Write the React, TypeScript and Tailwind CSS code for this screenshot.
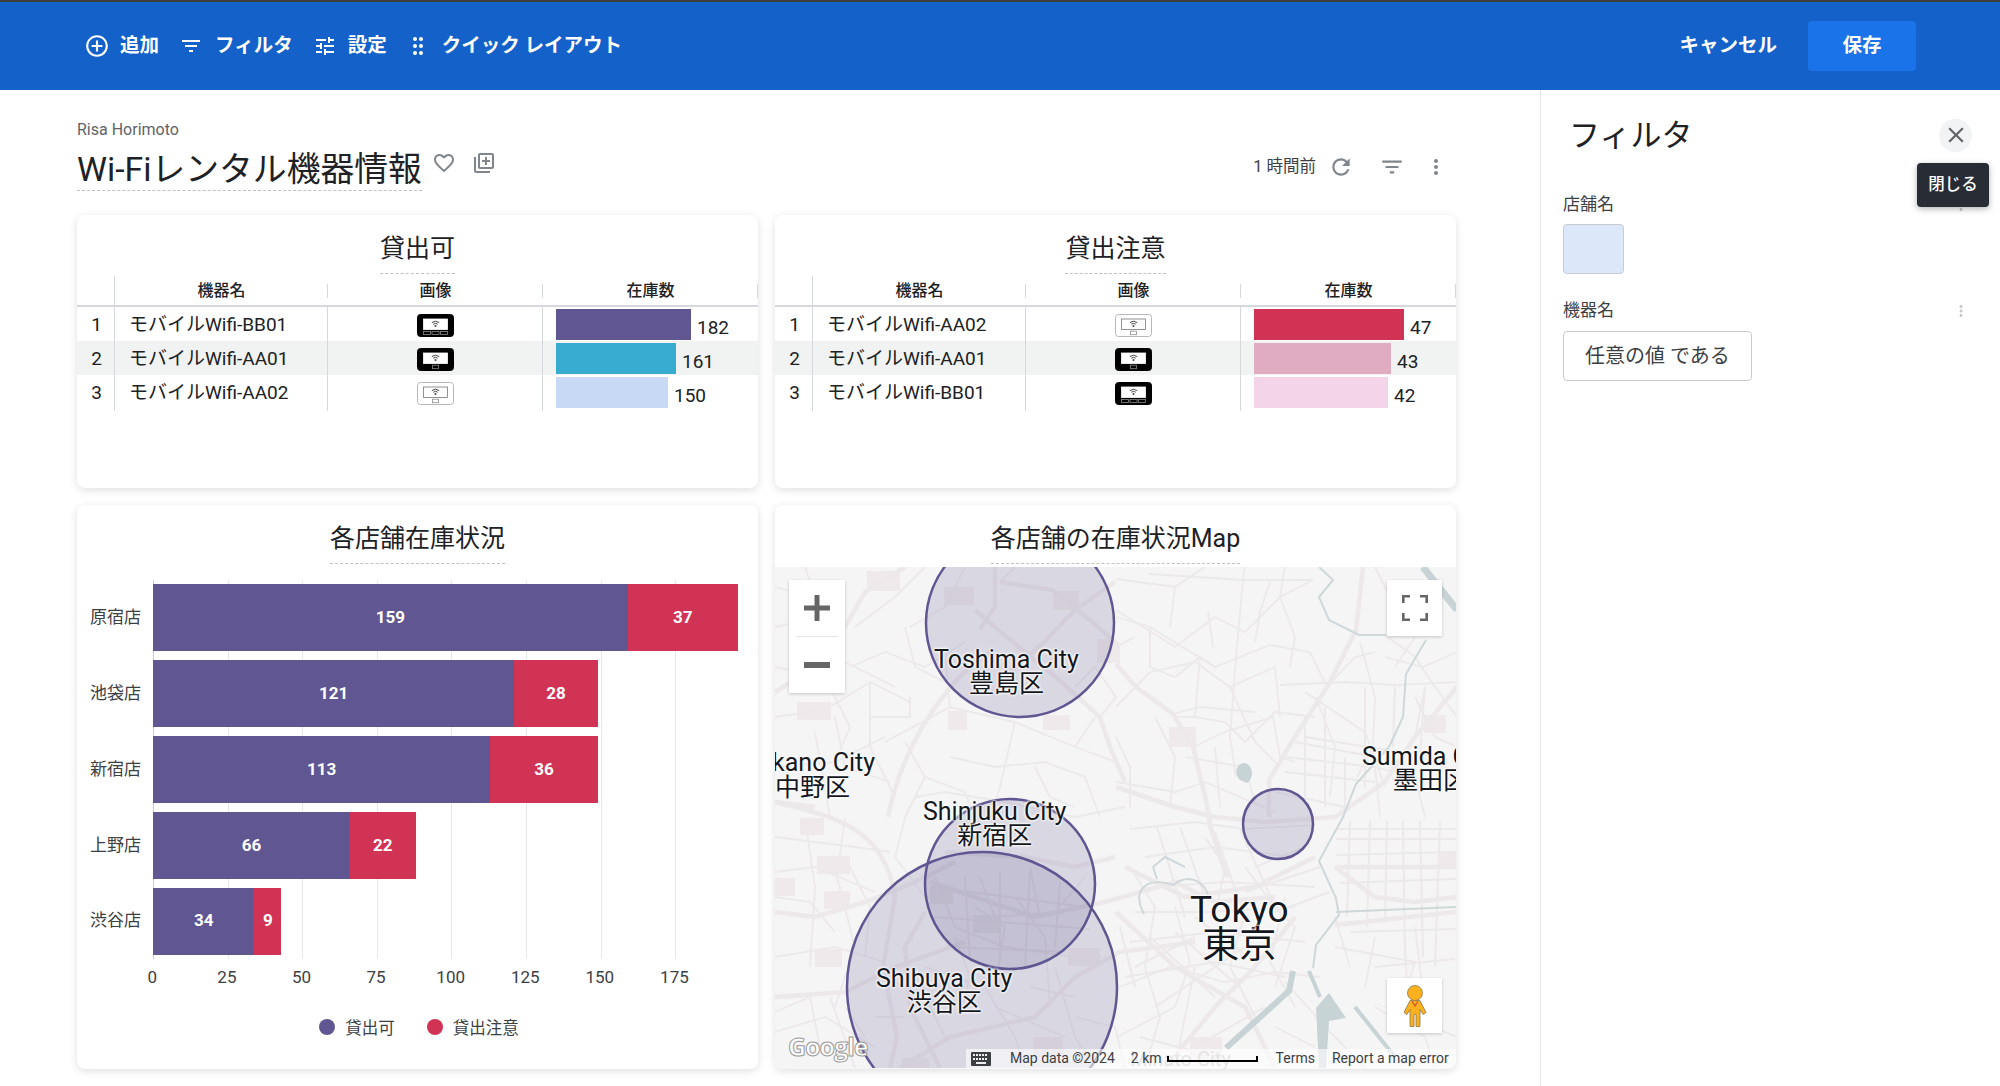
import React from "react";

type Device = "bb" | "aa01" | "aa02";
type StockRow = { no: number; name: string; device: Device; width: number; color: string; value: number };

const availableRows: StockRow[] = [
  { no: 1, name: "モバイルWifi-BB01", device: "bb", width: 135, color: "#5f5692", value: 182 },
  { no: 2, name: "モバイルWifi-AA01", device: "aa01", width: 120, color: "#38abd1", value: 161 },
  { no: 3, name: "モバイルWifi-AA02", device: "aa02", width: 112, color: "#c7d9f5", value: 150 },
];

const cautionRows: StockRow[] = [
  { no: 1, name: "モバイルWifi-AA02", device: "aa02", width: 150, color: "#d13354", value: 47 },
  { no: 2, name: "モバイルWifi-AA01", device: "aa01", width: 137, color: "#dfacc1", value: 43 },
  { no: 3, name: "モバイルWifi-BB01", device: "bb", width: 134, color: "#f3d4e8", value: 42 },
];

const stores = [
  { name: "原宿店", ok: 159, caution: 37 },
  { name: "池袋店", ok: 121, caution: 28 },
  { name: "新宿店", ok: 113, caution: 36 },
  { name: "上野店", ok: 66, caution: 22 },
  { name: "渋谷店", ok: 34, caution: 9 },
];

const ticks = [0, 25, 50, 75, 100, 125, 150, 175];
const UNIT = 2.985;

function Mi({ d, className }: { d: string; className?: string }) {
  return (
    <svg viewBox="0 0 24 24" fill="currentColor" className={className}>
      <path d={d} />
    </svg>
  );
}

const ICONS = {
  add: "M13 7h-2v4H7v2h4v4h2v-4h4v-2h-4V7zm-1-5C6.48 2 2 6.48 2 12s4.48 10 10 10 10-4.48 10-10S17.52 2 12 2zm0 18c-4.41 0-8-3.59-8-8s3.59-8 8-8 8 3.59 8 8-3.59 8-8 8z",
  filter: "M10 18h4v-2h-4v2zM3 6v2h18V6H3zm3 7h12v-2H6v2z",
  tune: "M3 17v2h6v-2H3zM3 5v2h10V5H3zm10 16v-2h8v-2h-8v-2h-2v6h2zM7 9v2H3v2h4v2h2V9H7zm14 4v-2H11v2h10zm-6-4h2V7h4V5h-4V3h-2v6z",
  refresh: "M17.65 6.35C16.2 4.9 14.21 4 12 4c-4.42 0-7.99 3.58-7.99 8s3.57 8 7.99 8c3.73 0 6.84-2.55 7.73-6h-2.08c-.82 2.33-3.04 4-5.65 4-3.31 0-6-2.69-6-6s2.69-6 6-6c1.66 0 3.14.69 4.22 1.78L13 11h7V4l-2.35 2.35z",
  heart: "M16.5 3c-1.74 0-3.41.81-4.5 2.09C10.91 3.81 9.24 3 7.5 3 4.42 3 2 5.42 2 8.5c0 3.78 3.4 6.86 8.55 11.54L12 21.35l1.45-1.32C18.6 15.36 22 12.28 22 8.5 22 5.42 19.58 3 16.5 3zm-4.4 15.55l-.1.1-.1-.1C7.14 14.24 4 11.39 4 8.5 4 6.5 5.5 5 7.5 5c1.54 0 3.04.99 3.57 2.36h1.87C13.46 5.99 14.96 5 16.5 5c2 0 3.5 1.5 3.5 3.5 0 2.89-3.14 5.74-7.9 10.05z",
  library: "M4 6H2v14c0 1.1.9 2 2 2h14v-2H4V6zm16-4H8c-1.1 0-2 .9-2 2v12c0 1.1.9 2 2 2h12c1.1 0 2-.9 2-2V4c0-1.1-.9-2-2-2zm0 14H8V4h12v12zm-7-2h2v-3h3V9h-3V6h-2v3h-3v2h3z",
  more: "M12 8c1.1 0 2-.9 2-2s-.9-2-2-2-2 .9-2 2 .9 2 2 2zm0 2c-1.1 0-2 .9-2 2s.9 2 2 2 2-.9 2-2-.9-2-2-2zm0 6c-1.1 0-2 .9-2 2s.9 2 2 2 2-.9 2-2-.9-2-2-2z",
  close: "M19 6.41L17.59 5 12 10.59 6.41 5 5 6.41 10.59 12 5 17.59 6.41 19 12 13.41 17.59 19 19 17.59 13.41 12z",
};

function DragDots() {
  return (
    <svg viewBox="0 0 12 20" fill="currentColor" className="w-[12px] h-[20px]">
      {[3, 10, 17].map((y) => (
        <g key={y}>
          <circle cx="3" cy={y} r="2" />
          <circle cx="9" cy={y} r="2" />
        </g>
      ))}
    </svg>
  );
}

function DeviceIcon({ device }: { device: Device }) {
  const dark = device !== "aa02";
  return (
    <svg viewBox="0 0 37 23" className="w-[37px] h-[23px]">
      <rect x="0.5" y="0.5" width="36" height="22" rx="3" fill={dark ? "#000" : "#fff"} stroke={dark ? "#000" : "#b5b8bb"} />
      <rect x="6.5" y="5" width="24" height="10.5" fill="#fff" stroke={dark ? "#fff" : "#777"} strokeWidth="0.8" />
      <path d="M14.8 8.6 Q18.5 5.8 22.2 8.6 M16.3 10.2 Q18.5 8.5 20.7 10.2" fill="none" stroke="#444" strokeWidth="1" />
      <circle cx="18.5" cy="12" r="1" fill="#444" />
      {device === "bb" ? (
        <g fill="none" stroke="#8a8a8a" strokeWidth="0.8">
          <rect x="6.5" y="17.5" width="7" height="3" />
          <rect x="15" y="17.5" width="7" height="3" />
          <rect x="23.5" y="17.5" width="7" height="3" />
        </g>
      ) : (
        <rect x="15.5" y="17.2" width="6" height="3.5" fill="none" stroke="#8a8a8a" strokeWidth="0.8" />
      )}
    </svg>
  );
}

function CardTitle({ title }: { title: string }) {
  return (
    <div className="h-[61px] pt-[17px] flex justify-center shrink-0">
      <span className="h-[42px] pb-[7px] leading-[34px] text-[25px] text-[#202124] border-b border-dashed border-[#bdc1c6]">
        {title}
      </span>
    </div>
  );
}

function StockTable({ title, rows }: { title: string; rows: StockRow[] }) {
  const head = "flex items-center justify-center text-[16px] font-medium text-[#202124]";
  const sep = "border-r border-[#d5d8dc]";
  return (
    <div className="bg-white rounded-lg shadow-[0_2px_8px_rgba(0,0,0,0.13)] overflow-hidden">
      <CardTitle title={title} />
      <div className="grid grid-cols-[38px_213px_215px_215px] h-[31px] border-b-2 border-[#d5d8dc]">
        <div className={sep} />
        {["機器名", "画像", "在庫数"].map((h) => (
          <div key={h} className="relative">
            <div className={`${head} h-full`}>{h}</div>
            <div className="absolute right-0 top-[8px] h-[14px] w-px bg-[#d5d8dc]" />
          </div>
        ))}
      </div>
      {rows.map((r) => (
        <div
          key={r.no}
          className={`grid grid-cols-[38px_213px_215px_215px] h-[34px] text-[19px] text-[#202124] ${r.no === 2 ? "bg-[#f1f3f3]" : ""}`}
        >
          <div className={`${sep} flex items-center justify-center pl-[2px]`}>{r.no}</div>
          <div className={`${sep} flex items-center pl-[14px] whitespace-nowrap`}>{r.name}</div>
          <div className={`${sep} flex items-center justify-center pt-[2px]`}>
            <DeviceIcon device={r.device} />
          </div>
          <div className="flex items-center pl-[13px]">
            <div className="h-[31px]" style={{ width: r.width, backgroundColor: r.color }} />
            <span className="ml-[6px] pt-[7px] text-[19px]">{r.value}</span>
          </div>
        </div>
      ))}
    </div>
  );
}

function StoreChart() {
  return (
    <div className="bg-white rounded-lg shadow-[0_2px_8px_rgba(0,0,0,0.13)] overflow-hidden flex flex-col">
      <CardTitle title="各店舗在庫状況" />
      <div className="mt-[14px] relative h-[379px]">
        {/* grid lines */}
        <div className="absolute left-[76px] top-0 bottom-0 flex">
          {ticks.map((t) => (
            <div key={t} className={`w-[74.6px] border-l ${t === 0 ? "border-[#c9ccd1]" : "border-[#e6e7ea]"}`} />
          ))}
        </div>
        <div className="relative h-full flex flex-col">
          {stores.map((s) => (
            <div key={s.name} className="flex-1 flex items-center">
              <div className="w-[76px] pr-[12px] text-right text-[17px] text-[#3c4043]">{s.name}</div>
              <div className="flex h-[67px] text-white font-bold text-[17px]">
                <div className="flex items-center justify-center bg-[#5f5692]" style={{ width: s.ok * UNIT }}>
                  {s.ok}
                </div>
                <div className="flex items-center justify-center bg-[#d13354]" style={{ width: s.caution * UNIT }}>
                  {s.caution}
                </div>
              </div>
            </div>
          ))}
        </div>
      </div>
      <div className="ml-[38px] mt-[6px] flex text-[17px] text-[#3c4043] leading-[24px]">
        {ticks.map((t) => (
          <div key={t} className="w-[74.6px] text-center">
            {t}
          </div>
        ))}
      </div>
      <div className="mt-[28px] pl-[3px] flex justify-center items-center text-[16.5px] text-[#3c4043] leading-[24px]">
        <span className="w-[16px] h-[16px] rounded-full bg-[#5f5692] mb-[4px]" />
        <span className="ml-[10px]">貸出可</span>
        <span className="ml-[32px] w-[16px] h-[16px] rounded-full bg-[#d13354] mb-[4px]" />
        <span className="ml-[10px]">貸出注意</span>
      </div>
    </div>
  );
}

const majorRoads = [
  "M113 250 C120 215 135 170 173 123 C185 108 195 100 215 85",
  "M200 43 L240 77 L283 112 L325 150 L335 180 L350 215",
  "M220 0 L220 40 L205 62",
  "M225 15 L277 23 L320 57 L345 80",
  "M340 15 L300 43 L267 77 L235 105",
  "M0 125 L40 100 L70 60 L90 25 L130 0",
  "M341 97 L361 120 L398 147 L418 180 L431 233 L436 262 L452 310",
  "M588 0 L581 63 L554 117 L518 173 L494 213 L494 250",
  "M0 235 C60 250 110 260 120 330 L108 400 L122 470 L115 501",
  "M0 345 L40 350 L90 335 L140 315 L180 295",
  "M0 430 L70 425 L120 400 L190 375",
  "M125 501 L175 470 L260 450 L300 410 L345 385 L420 375",
  "M150 345 L130 380 L135 440 L165 501",
  "M155 315 L200 330 L260 350 L330 335 L400 315 L440 335 L500 330",
  "M350 300 L410 330 L480 320 L540 290",
  "M341 345 L400 400 L470 440 L500 501",
  "M560 300 L600 330 L640 335 L682 330",
  "M440 250 L490 255 L560 250 L610 215 L640 170 L682 120",
  "M560 300 L682 300",
  "M560 358 L682 345",
  "M340 290 L300 300 L250 290 L170 285",
  "M520 350 L480 400 L440 440 L390 501",
  "M0 235 L40 240 M341 220 L400 240 L440 250",
];

const minorRoads = [
  "M0 60 L70 45 M20 80 L70 95 L120 120 M75 100 L110 85 L150 100 L190 75",
  "M0 150 L50 143 L95 115 L135 135 M95 115 L95 180 L120 230 M60 150 L70 200 L115 215",
  "M110 175 L175 140 L240 155 L300 180 L341 195 M175 140 L170 85",
  "M0 200 L60 195 L110 170 M40 165 L55 250 M95 150 L135 150 L135 130",
  "M175 190 L220 200 L270 195 L310 210 L325 250 M240 155 L225 220 L215 250",
  "M240 0 L225 15 M150 0 L120 30 L80 60 M190 0 L170 40 L135 60",
  "M374 7 L468 13 L538 13 M341 43 L400 80 L440 50 L470 65 L505 30 L538 13",
  "M470 0 L468 13 L461 90 L455 170 L461 210 M438 80 L433 45 M495 15 L485 45 L480 75",
  "M341 50 L375 60 L440 100 L495 78 L535 85 L552 120 L580 90 L600 85",
  "M375 60 L375 100 L400 110 L425 90 L440 100 M425 90 L420 150 L400 150",
  "M341 140 L375 105 L420 95 L455 120 L500 100 L505 150",
  "M455 120 L480 175 L505 200 M420 150 L450 155 L470 175 L500 145 L540 150",
  "M398 147 L425 140 L480 145 M418 180 L450 165 L498 150 L505 190 L520 195",
  "M541 130 L560 180 L555 230 M585 75 L600 130 L598 180 L582 210",
  "M505 118 L570 115 L620 118 L682 115 M530 170 L625 185 M510 190 L600 200 L640 210",
  "M530 125 L590 165 L610 220 M620 100 L640 70 M610 90 L648 100 L682 85",
  "M341 170 L355 200 L355 240 M341 215 L400 225 L430 215 L500 245",
  "M0 270 L80 280 L115 285 M30 251 L40 320 L35 400 M70 251 L62 310 L80 380 L60 440",
  "M0 305 L40 300 L100 325 M130 251 L120 290 L150 330 M0 390 L60 380 L110 395",
  "M0 465 L50 450 L100 480 M55 430 L80 501 M150 400 L210 420 L240 470 L250 501",
  "M180 370 L195 410 L185 450 M200 340 L230 360 L220 420 M240 330 L270 370 L275 440",
  "M160 310 L180 360 L230 380 L300 390 M205 310 L220 350 L280 345 L310 310",
  "M255 300 L265 350 M300 450 L340 460 L350 501 M280 400 L300 470 L320 501",
  "M130 251 L140 230 L170 225 L230 235 L300 250 L350 240",
  "M355 300 L380 340 L370 400 L385 450 L370 501 M420 400 L410 450 L400 501",
  "M345 420 L395 400 L450 415 L500 405 L545 410 M342 470 L400 440",
  "M470 300 L500 340 L520 360 L500 420 M430 270 L450 300 L440 350",
  "M510 415 L560 470 L590 501 M560 380 L640 395 L625 440 M575 400 L560 350",
  "M600 440 L650 470 L660 501 M500 460 L540 480",
  // extra streets, mostly the busy parts around the station and the upper right
  "M341 12 L400 20 L430 0 M400 20 L395 60 M510 0 L505 30 L520 70 L515 100",
  "M600 0 L620 40 L650 60 M610 68 L640 90 L660 120 L682 150 M640 130 L660 170 L682 180",
  "M0 20 L40 30 L70 60 M30 0 L40 30 M0 100 L50 110 L75 160 L60 195 M130 60 L140 100 L170 115",
  "M130 175 L150 210 L190 225 M150 210 L130 250 M190 225 L200 250 M260 200 L275 230 L300 240",
  "M300 120 L320 100 L341 130 L325 150 M300 180 L320 150 M341 80 L360 70",
  "M380 150 L400 190 L395 240 M410 190 L470 200 L480 235 M440 180 L445 240",
  "M650 120 L645 190 L682 205 M640 170 L650 120 M600 200 L605 250 M640 210 L650 250",
  "M355 262 L420 255 L470 262 L540 258 M370 290 L440 280 L520 290 M380 320 L450 315 L540 320",
  "M360 345 L430 345 L520 340 M355 375 L440 365 L530 375 M350 410 L440 395 L510 410",
  "M470 345 L455 400 L480 450 M510 330 L495 395 L520 440 M400 340 L415 395 L400 440",
  "M0 330 L35 335 L60 365 M75 300 L95 340 L90 390 M0 445 L35 430 L45 480 M70 440 L90 470",
  "M110 410 L150 430 L170 470 M100 450 L130 450 M255 420 L300 430 M220 440 L290 470",
  "M600 400 L680 392 M610 440 L682 470 M630 380 L632 420 M590 420 L600 370 M640 360 L650 440",
];

const gridLines: number[][] = [
  [561, 262, 682, 262], [561, 272, 682, 272], [561, 288, 682, 285], [565, 316, 682, 312],
  [575, 365, 682, 362], [575, 254, 572, 350], [595, 254, 592, 360], [612, 254, 610, 355],
  [628, 254, 630, 390], [645, 254, 648, 390], [665, 254, 660, 400],
  [520, 175, 600, 190], [510, 205, 600, 215], [500, 225, 570, 240], [530, 150, 530, 230],
  [550, 140, 550, 240], [570, 190, 570, 245], [590, 120, 590, 220], [620, 120, 618, 180],
  [382, 260, 410, 350], [405, 260, 430, 330], [440, 265, 470, 350], [465, 262, 500, 340],
  [480, 300, 530, 280], [470, 325, 545, 300], [500, 345, 555, 325], [375, 370, 440, 430],
  [400, 365, 465, 420], [420, 350, 480, 395], [360, 400, 420, 370], [380, 440, 470, 380],
  [345, 360, 360, 420], [365, 470, 440, 490], [420, 480, 490, 440],
  [155, 320, 310, 340], [160, 350, 315, 362], [175, 380, 290, 385], [190, 310, 195, 395],
  [225, 305, 225, 395], [255, 305, 250, 400], [285, 315, 280, 380],
];

const blocks = [
  [92, 4, 33, 20], [22, 135, 34, 18], [173, 144, 19, 19], [268, 148, 27, 15], [169, 20, 30, 18],
  [278, 24, 26, 19], [322, 72, 19, 24], [25, 251, 24, 17], [42, 289, 33, 18], [0, 311, 20, 18],
  [49, 324, 26, 18], [40, 382, 27, 18], [155, 319, 23, 18], [198, 348, 27, 18], [293, 381, 32, 18],
  [127, 491, 27, 10], [394, 160, 27, 20], [649, 148, 22, 18], [341, 77, 4, 20], [665, 285, 17, 17],
  [258, 470, 30, 20], [415, 470, 32, 25],
];

const waters = [
  "M544 0 L558 13 L544 30 L554 53 L584 68 L611 68",
  "M651 73 L631 107 L628 150 L614 180 L581 217 L568 250 L544 294 L561 331 L564 348 L541 378 L538 401",
  "M369 347 C355 320 375 310 398 318 C415 305 430 315 434 331",
  "M378 300 L390 290 L410 300 M378 300 L382 312",
  "M561 345 L682 340",
];

function MapPanel() {
  const halo = "[text-shadow:0_0_3px_#fff,0_0_3px_#fff,0_0_3px_#fff]";
  const label = `absolute text-center leading-[24px] text-[25px] text-[#14171c] whitespace-nowrap ${halo}`;
  return (
    <div className="bg-white rounded-lg shadow-[0_2px_8px_rgba(0,0,0,0.13)] overflow-hidden flex flex-col">
      <CardTitle title="各店舗の在庫状況Map" />
      <div className="relative flex-1 mt-px bg-[#f5f5f5] overflow-hidden">
        <svg viewBox="0 0 682 501" className="absolute inset-0 w-[682px] h-[501px]" fill="none">
          {blocks.map(([x, y, w, h], i) => (
            <rect key={i} x={x} y={y} width={w} height={h} fill="#efe9eb" />
          ))}
          {minorRoads.map((d, i) => (
            <path key={i} d={d} stroke="#ede8ea" strokeWidth="1.8" />
          ))}
          {gridLines.map(([x1, y1, x2, y2], i) => (
            <line key={i} x1={x1} y1={y1} x2={x2} y2={y2} stroke="#ede8ea" strokeWidth="2" />
          ))}
          {majorRoads.map((d, i) => (
            <path key={i} d={d} stroke="#ede8ea" strokeWidth="4.5" />
          ))}
          {waters.map((d, i) => (
            <path key={i} d={d} stroke="#ced8da" strokeWidth="2" />
          ))}
          <path d="M648 0 L682 43" stroke="#c8d3d6" strokeWidth="7" />
          <path d="M451 481 L514 424 L518 404" stroke="#c8d3d6" strokeWidth="6" />
          <path d="M541 441 L554 426 L571 451 L554 454 L551 501 L544 501 Z" fill="#c8d3d6" />
          <path d="M534 404 L545 430 M580 440 L620 490" stroke="#c8d3d6" strokeWidth="4" />
          <path d="M465 213 C458 205 462 196 470 196 C480 200 478 212 472 216 Z" fill="#c8d3d6" />
          <g fill="#5f5692" fillOpacity="0.18" stroke="#5f5692" strokeWidth="2.5">
            <circle cx="245" cy="56" r="94" />
            <circle cx="235" cy="317" r="85" />
            <circle cx="207" cy="420" r="135" />
            <circle cx="503" cy="257" r="35" />
          </g>
        </svg>

        <div className={`${label} left-[159px] top-[81px]`}>
          Toshima City
          <br />
          豊島区
        </div>
        <div className={`${label} right-[581px] top-[184px]`}>kano City</div>
        <div className={`${label} left-0 top-[209px]`}>中野区</div>
        <div className={`${label} left-[148px] top-[233px]`}>
          Shinjuku City
          <br />
          新宿区
        </div>
        <div className={`${label} left-[101px] top-[400px]`}>
          Shibuya City
          <br />
          渋谷区
        </div>
        <div className={`${label} left-[587px] top-[178px]`}>Sumida City</div>
        <div className={`${label} left-[618px] top-[202px]`}>墨田区</div>
        <div className={`absolute left-[415px] top-[325px] text-center leading-[36px] text-[37px] text-[#14171c] ${halo}`}>
          Tokyo
          <br />
          東京
        </div>

        {/* zoom */}
        <div className="absolute left-[14px] top-[13px] w-[56px] h-[113px] bg-white shadow-[0_1px_3px_rgba(0,0,0,0.2)] flex flex-col items-center">
          <svg viewBox="0 0 26 26" className="w-[26px] h-[26px] mt-[15px]" fill="#666">
            <path d="M0 10.5h26v5H0zM10.5 0h5v26h-5z" />
          </svg>
          <div className="w-[42px] h-px bg-[#e6e6e6] mt-[15px]" />
          <svg viewBox="0 0 26 6" className="w-[26px] h-[6px] mt-[25px]" fill="#666">
            <rect width="26" height="6" />
          </svg>
        </div>

        {/* fullscreen */}
        <div className="absolute left-[612px] top-[13px] w-[55px] h-[56px] bg-white shadow-[0_1px_3px_rgba(0,0,0,0.2)] flex items-center justify-center">
          <svg viewBox="0 0 26 26" className="w-[26px] h-[26px]" fill="none" stroke="#666" strokeWidth="2.6">
            <path d="M1.3 8V1.3H8M18 1.3h6.7V8M24.7 18v6.7H18M8 24.7H1.3V18" />
          </svg>
        </div>

        {/* pegman */}
        <div className="absolute left-[612px] top-[411px] w-[55px] h-[55px] bg-white shadow-[0_1px_3px_rgba(0,0,0,0.2)] flex items-center justify-center">
          <svg viewBox="0 0 24 42" className="w-[24px] h-[42px]" fill="#fbb01e" stroke="#8a7a50" strokeWidth="0.8">
            <circle cx="12" cy="8" r="7.5" />
            <path d="M7 15.5h10l6 12-3 2-3-5v17h-4v-12h-2v12H7v-17l-3 5-3-2z" />
            <path d="M9 16l3 5 3-5" fill="none" stroke="#d0532c" strokeWidth="1.2" />
          </svg>
        </div>

        {/* google + attribution */}
        <div className="absolute left-[13px] bottom-[7px] text-[25px] leading-[32px] font-bold font-['Open_Sans',sans-serif] text-white [-webkit-text-stroke:1px_#9a9a9a] tracking-[-1px]">
          Google
        </div>
        <div className="absolute left-[355px] bottom-0 text-[20px] leading-[20px] text-[#bdbdbd] whitespace-nowrap">Minato City</div>
        <div className="absolute left-[191px] right-0 bottom-0 h-[20px] pb-[1px] flex items-center bg-white/60 text-[14px] text-[#3c4043] whitespace-nowrap">
          <svg viewBox="0 0 20 14" className="ml-[5px] w-[20px] h-[14px]" fill="#3c4043">
            <path d="M1 0h18a1 1 0 0 1 1 1v12a1 1 0 0 1-1 1H1a1 1 0 0 1-1-1V1a1 1 0 0 1 1-1zm1 2v2h2V2zm3 0v2h2V2zm3 0v2h2V2zm3 0v2h2V2zm3 0v2h2V2zM2 6v2h2V6zm3 0v2h2V6zm3 0v2h2V6zm3 0v2h2V6zm3 0v2h2V6zM5 10v2h10v-2z" fillRule="evenodd" />
          </svg>
          <span className="ml-[19px]">Map data ©2024</span>
          <span className="ml-[16px]">2 km</span>
          <span className="ml-[5px] w-[91px] h-[6px] border-x-2 border-b-2 border-black" />
          <span className="ml-[18px]">Terms</span>
          <span className="ml-[17px]">Report a map error</span>
        </div>
      </div>
    </div>
  );
}

function FilterPanel() {
  const more = <Mi d={ICONS.more} className="w-[18px] h-[18px] text-[#c4c7cc]" />;
  return (
    <aside className="relative w-[460px] shrink-0 border-l border-[#e3e5e8] bg-white">
      <div className="h-[90px] pl-[28px] pr-[28px] flex items-center justify-between">
        <h2 className="pt-[3px] text-[31px] text-[#202124]">フィルタ</h2>
        <button className="w-[33px] h-[33px] rounded-full bg-[#f1f3f4] flex items-center justify-center text-[#5f6368]">
          <Mi d={ICONS.close} className="w-[26px] h-[26px]" />
        </button>
      </div>
      <div className="ml-[22px] mr-[30px]">
        <div className="mt-[13px] h-[24px] flex items-center justify-between text-[17px] text-[#3c4043]">
          店舗名
          {more}
        </div>
        <div className="mt-[7px] w-[61px] h-[50px] rounded bg-[#dce7fa] border border-[#c8ccd2]" />
        <div className="mt-[25px] h-[24px] flex items-center justify-between text-[17px] text-[#3c4043]">
          機器名
          {more}
        </div>
        <button className="mt-[8px] w-[189px] h-[50px] rounded border border-[#c8ccd2] text-[20px] text-[#3c4043]">
          任意の値 である
        </button>
      </div>
      <div className="absolute left-[376px] top-[73px] w-[72px] h-[44px] rounded bg-[#282c35] text-white text-[16.5px] font-medium flex items-center justify-center shadow-[0_2px_6px_rgba(0,0,0,0.3)]">
        閉じる
      </div>
    </aside>
  );
}

export default function App() {
  const navText = "text-[19.5px] font-bold text-white whitespace-nowrap";
  return (
    <div className="w-[2000px] h-[1086px] overflow-hidden flex flex-col bg-white font-['Roboto','Noto_Sans_CJK_JP',sans-serif]">
      <header className="h-[90px] shrink-0 border-t-2 border-[#3a3f3a] bg-[#1361c9] flex items-center pl-[84px] pr-[84px] text-white">
        <Mi d={ICONS.add} className="w-[26px] h-[26px]" />
        <span className={`ml-[10px] ${navText}`}>追加</span>
        <Mi d={ICONS.filter} className="ml-[20px] w-[24px] h-[24px]" />
        <span className={`ml-[12px] ${navText}`}>フィルタ</span>
        <Mi d={ICONS.tune} className="ml-[20px] w-[24px] h-[24px]" />
        <span className={`ml-[11px] ${navText}`}>設定</span>
        <span className="ml-[25px]">
          <DragDots />
        </span>
        <span className={`ml-[18px] ${navText}`}>クイック レイアウト</span>
        <span className={`ml-auto ${navText}`}>キャンセル</span>
        <button className={`ml-[31px] w-[108px] h-[50px] rounded bg-[#1a73e8] ${navText}`}>保存</button>
      </header>

      <div className="flex-1 flex min-h-0">
        <main className="flex-1 min-w-0 pl-[77px] pr-[83px] pt-[29px]">
          <div className="text-[16px] leading-[22px] text-[#5f6368]">Risa Horimoto</div>
          <div className="mt-[8px] flex items-start">
            <h1 className="h-[42px] leading-[41px] text-[33.8px] text-[#202124] border-b border-dashed border-[#bdc1c6] whitespace-nowrap">
              Wi-Fiレンタル機器情報
            </h1>
            <Mi d={ICONS.heart} className="ml-[10px] mt-[2px] w-[24px] h-[24px] text-[#80868b]" />
            <Mi d={ICONS.library} className="ml-[16px] mt-[2px] w-[24px] h-[24px] text-[#80868b]" />
            <div className="ml-auto flex items-center h-[30px] mt-[3px] text-[#5f6368]">
              <span className="text-[16.5px] text-[#3c4043]">1 時間前</span>
              <Mi d={ICONS.refresh} className="ml-[12px] w-[26px] h-[26px] text-[#80868b]" />
              <Mi d={ICONS.filter} className="ml-[25px] w-[26px] h-[26px] text-[#80868b]" />
              <Mi d={ICONS.more} className="ml-[19px] w-[24px] h-[24px] text-[#80868b]" />
              <span className="w-[9px]" />
            </div>
          </div>
          <div className="mt-[24px] grid grid-cols-[681px_681px] grid-rows-[273px_564px] gap-x-[17px] gap-y-[17px]">
            <StockTable title="貸出可" rows={availableRows} />
            <StockTable title="貸出注意" rows={cautionRows} />
            <StoreChart />
            <MapPanel />
          </div>
        </main>
        <FilterPanel />
      </div>
    </div>
  );
}
